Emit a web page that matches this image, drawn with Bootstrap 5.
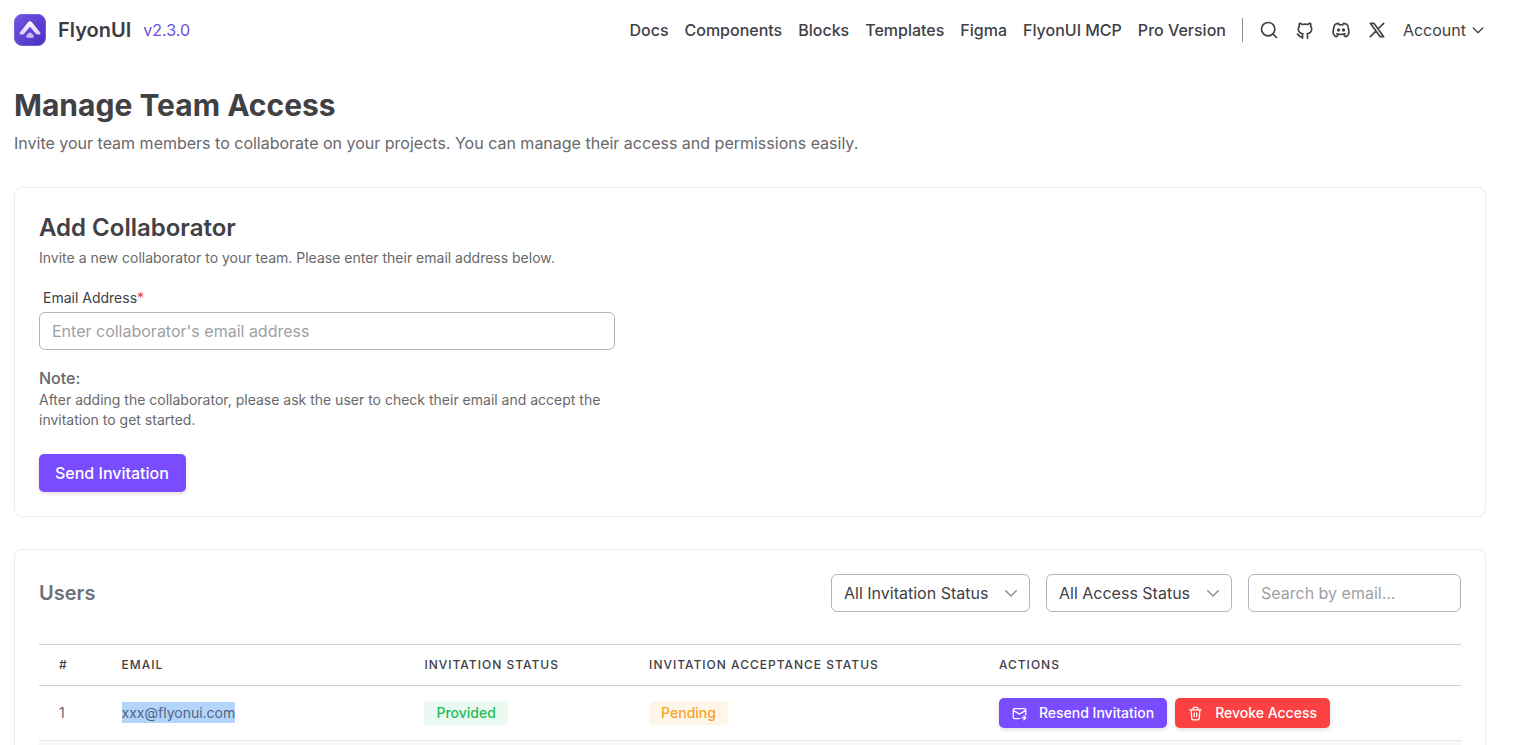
<!DOCTYPE html>
<html lang="en">
<head>
<meta charset="utf-8">
<meta name="viewport" content="width=device-width, initial-scale=1">
<title>Manage Team Access</title>
<link href="https://cdn.jsdelivr.net/npm/bootstrap@5.3.0/dist/css/bootstrap.min.css" rel="stylesheet">
<style>
body { font-family: Inter, sans-serif; font-size: 16px; line-height: 24px; color: #68686a; background: #fff; }
.page { padding: 0 33px 0 14px; }
.topbar { height: 60px; }
.ink { color: #404045; }
.brand-name { font-size: 20px; line-height: 28px; font-weight: 600; color: #3b3b3f; margin-left: 12px; }
.version { color: #6a4fd6; margin-left: 12px; }
.topbar a { text-decoration: none; }
.topbar .menu-link { color: #404045; font-weight: 500; }
.divider { width: 1px; height: 24px; background: #8e8e92; }
.glyph { fill: none; stroke: currentColor; stroke-width: 2; stroke-linecap: round; stroke-linejoin: round; display: block; flex: none; }
.title { font-size: 30px; line-height: 36px; font-weight: 700; margin: 27px 0 8px; }
.intro { margin-bottom: 32px; }
.panel { border: 1px solid #ececee; border-radius: 8px; padding: 24px; margin-bottom: 32px; }
.panel-title { font-size: 24px; line-height: 32px; font-weight: 600; margin: 0 0 4px; }
.fine { font-size: 14px; line-height: 20px; }
.half { max-width: 576px; }
.field-label { color: #404045; padding: 0 4px; margin: 20px 0 4px; display: block; }
.star { color: #f0353f; }
.field { height: 38px; border: 1px solid #b4b4b8; border-radius: 6px; padding: 0 12px; color: #404045; font-size: 16px; line-height: 24px; }
.field::placeholder { color: #a0a0a3; opacity: 1; }
.pick { appearance: none; background: none; width: 100%; }
.pick-wrap { position: relative; }
.pick-wrap .glyph { position: absolute; right: 10px; top: 10px; color: #8f8f98; pointer-events: none; }
.w-invite { width: 199px; }
.w-access { width: 186px; }
.w-search { width: 213px; }
.act { color: #fff; border: 0; border-radius: 5px; font-weight: 500; box-shadow: 0 2px 4px #0000001f; }
.act:hover { color: #fff; }
.violet, .violet:hover { background: #794dff; }
.danger, .danger:hover { background: #fb4141; }
.send { height: 38px; padding: 0 17px 0 16px; font-size: 16px; margin-top: 24px; }
.small-act { height: 30px; padding: 0 13px; font-size: 14px; line-height: 20px; gap: 12px; }
.users { font-size: 20px; line-height: 28px; font-weight: 600; color: #707074; }
.roster { table-layout: fixed; width: 100%; margin: 32px 0 0; border-top: 1px solid #cfcfd1; font-size: 14px; line-height: 20px; }
.roster th { font-size: 12px; font-weight: 500; letter-spacing: 1px; text-transform: uppercase; color: #404045; padding: 0 20px; height: 41px; border-bottom: 1px solid #cfcfd1; }
.roster td { padding: 0 20px; height: 55px; border-bottom: 1px solid #e8e8ec; color: #68686a; }
.roster .next-row td { background: #f8f8fb; }
.picked { background: #b4d5fb; color: #4f6480; padding: 2px 0; }
.pill { height: 24px; padding: 0 12px; border-radius: 4px; font-weight: 500; display: inline-flex; align-items: center; }
.ok { background: #eafaf0; color: #1fbc59; }
.wait { background: #fff6ea; color: #f7a127; }
</style>
</head>
<body class="vh-100 overflow-hidden">
<div class="page">
  <header class="topbar d-flex align-items-center justify-content-between">
    <a href="#" class="d-flex align-items-center">
      <svg width="32" height="32" viewBox="0 0 32 32" aria-hidden="true">
        <defs>
          <linearGradient id="tile" x1="0" y1="0" x2="1" y2="1"><stop offset="0" stop-color="#7255e0"/><stop offset="1" stop-color="#4a30c4"/></linearGradient>
          <linearGradient id="wing" x1="0" y1="0" x2="0" y2="1"><stop offset="0" stop-color="#fff"/><stop offset="1" stop-color="#d8cdfa"/></linearGradient>
        </defs>
        <rect x=".5" y=".5" width="31" height="31" rx="7.5" fill="url(#tile)" stroke="#7560dc"/>
        <path d="M16 7.3c.7 0 1.2.3 1.7.8l8.500 10.500c.7.9.1 2-1 2h-1.800c-.7 0-1.200-.3-1.600-.8L16 12.700l-5.800 7.100c-.4.5-.9.8-1.600.8H6.800c-1.100 0-1.700-1.100-1-2l8.500-10.500c.5-.5 1-.8 1.700-.8z" fill="url(#wing)"/>
        <path d="M16 18.400c.6 0 1 .2 1.400.6l2 2.300c.9 1.100.3 2.500-1.100 2.500h-4.600c-1.400 0-2-1.400-1.100-2.500l2-2.300c.4-.4.8-.6 1.400-.6z" fill="#c9baf6"/>
      </svg>
      <span class="brand-name">FlyonUI</span>
      <span class="version">v2.3.0</span>
    </a>
    <nav class="d-flex align-items-center gap-3 ink">
      <a class="menu-link" href="#">Docs</a>
      <a class="menu-link" href="#">Components</a>
      <a class="menu-link" href="#">Blocks</a>
      <a class="menu-link" href="#">Templates</a>
      <a class="menu-link" href="#">Figma</a>
      <a class="menu-link" href="#">FlyonUI MCP</a>
      <a class="menu-link" href="#">Pro Version</a>
      <span class="divider"></span>
      <a class="ink" href="#" aria-label="Search"><svg class="glyph" width="20" height="20" viewBox="0 0 24 24"><path d="M3 11a8 8 0 1 0 16 0 8 8 0 1 0-16 0M21 21l-4.300-4.300"/></svg></a>
      <a class="ink" href="#" aria-label="GitHub"><svg class="glyph" width="20" height="20" viewBox="0 0 24 24"><path d="M9 20c-4.300 1.400-4.300-2.500-6-3m12 5v-3.500c0-1 .1-1.400-.5-2 2.800-.3 5.500-1.400 5.500-6a4.600 4.600 0 0 0-1.300-3.200 4.200 4.200 0 0 0-.1-3.200s-1.100-.3-3.500 1.300a12.300 12.300 0 0 0-6.200 0C6.500 3.800 5.400 4.100 5.400 4.100a4.200 4.200 0 0 0-.1 3.200A4.600 4.600 0 0 0 4 10.500c0 4.600 2.700 5.700 5.500 6-.6.6-.6 1.200-.5 2V22"/></svg></a>
      <a class="ink" href="#" aria-label="Discord"><svg class="glyph" width="20" height="20" viewBox="0 0 24 24"><path d="M8 12a1 1 0 1 0 2 0 1 1 0 0 0-2 0M14 12a1 1 0 1 0 2 0 1 1 0 0 0-2 0M15.500 17c0 1 1.500 3 2 3 1.500 0 2.833-1.667 3.500-3 .667-1.667.5-5.833-1.500-11.500-1.457-1.015-3-1.340-4.500-1.500l-.972 1.923a11.913 11.913 0 0 0-4.053 0L9 4c-1.500.16-3.043.485-4.500 1.500-2 5.667-2.167 9.833-1.500 11.500.667 1.333 2 3 3.500 3 .5 0 2-2 2-3M7 16.500c3.500 1 6.500 1 10 0"/></svg></a>
      <a class="ink" href="#" aria-label="X"><svg class="glyph" width="20" height="20" viewBox="0 0 24 24"><path d="m4 4 11.733 16H20L8.267 4zM4 20l6.768-6.768m2.460-2.460L20 4"/></svg></a>
      <a class="ink d-flex align-items-center gap-1" href="#">Account <svg class="glyph" width="16" height="16" viewBox="0 0 24 24"><path d="m5 9 7 7 7-7"/></svg></a>
    </nav>
  </header>

  <main>
    <h1 class="title ink">Manage Team Access</h1>
    <p class="intro">Invite your team members to collaborate on your projects. You can manage their access and permissions easily.</p>

    <section class="panel">
      <h2 class="panel-title ink">Add Collaborator</h2>
      <p class="fine mb-0">Invite a new collaborator to your team. Please enter their email address below.</p>
      <form class="half">
        <label class="field-label fine" for="email">Email Address<span class="star">*</span></label>
        <input class="field w-100 d-block" id="email" type="email" placeholder="Enter collaborator's email address">
        <p class="mt-3 mb-0 fw-medium">Note:</p>
        <p class="fine mb-0">After adding the collaborator, please ask the user to check their email and accept the invitation to get started.</p>
        <button class="btn act violet send" type="button">Send Invitation</button>
      </form>
    </section>

    <section class="panel">
      <div class="d-flex align-items-center gap-3">
        <h2 class="users mb-0 me-auto">Users</h2>
        <div class="pick-wrap w-invite">
          <select class="field pick" aria-label="Invitation status"><option>All Invitation Status</option></select>
          <svg class="glyph" width="18" height="18" viewBox="0 0 24 24"><path d="m5 9 7 7 7-7"/></svg>
        </div>
        <div class="pick-wrap w-access">
          <select class="field pick" aria-label="Access status"><option>All Access Status</option></select>
          <svg class="glyph" width="18" height="18" viewBox="0 0 24 24"><path d="m5 9 7 7 7-7"/></svg>
        </div>
        <input class="field w-search" type="search" placeholder="Search by email..." aria-label="Search by email">
      </div>
      <table class="roster">
        <colgroup><col style="width:4.4%"><col style="width:21.3%"><col style="width:15.8%"><col style="width:24.6%"><col></colgroup>
        <thead>
          <tr><th>#</th><th>Email</th><th>Invitation Status</th><th>Invitation Acceptance Status</th><th>Actions</th></tr>
        </thead>
        <tbody>
          <tr>
            <td>1</td>
            <td><span class="picked">xxx@flyonui.com</span></td>
            <td><span class="pill ok">Provided</span></td>
            <td><span class="pill wait">Pending</span></td>
            <td>
              <div class="d-flex gap-2">
                <button type="button" class="btn act violet small-act d-flex align-items-center"><svg class="glyph" width="15" height="15" viewBox="0 0 24 24"><path d="M12 20H4a2 2 0 0 1-2-2V6a2 2 0 0 1 2-2h16a2 2 0 0 1 2 2v8M2 7l10 6 10-6M16 19h6M19 16l3 3-3 3"/></svg>Resend Invitation</button>
                <button type="button" class="btn act danger small-act d-flex align-items-center"><svg class="glyph" width="15" height="15" viewBox="0 0 24 24"><path d="M3 6h18M10 11v6M14 11v6M5 6l1 14a2 2 0 0 0 2 2h8a2 2 0 0 0 2-2l1-14M8 6V4a2 2 0 0 1 2-2h4a2 2 0 0 1 2 2v2"/></svg>Revoke Access</button>
              </div>
            </td>
          </tr>
          <tr class="next-row"><td colspan="5"></td></tr>
        </tbody>
      </table>
    </section>
  </main>
</div>
<script src="https://cdn.jsdelivr.net/npm/bootstrap@5.3.0/dist/js/bootstrap.bundle.min.js"></script>
</body>
</html>
